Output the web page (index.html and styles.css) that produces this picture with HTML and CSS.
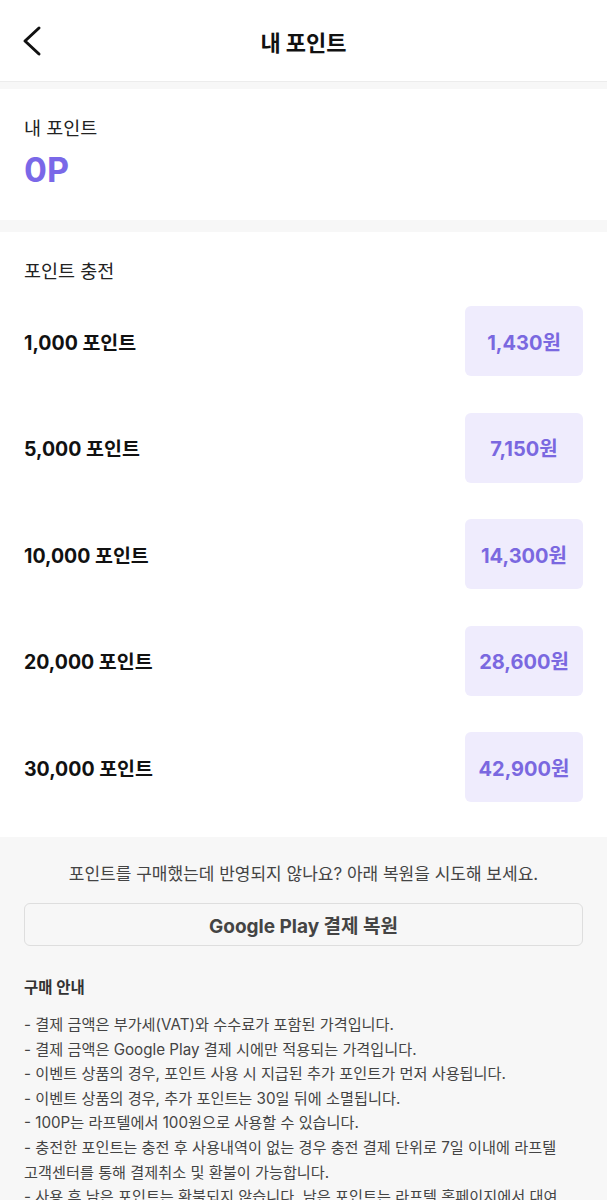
FILE: index.html
```html
<!DOCTYPE html>
<html lang="ko">

<head>
    <meta charset="UTF-8">
    <title>내 포인트</title>
    <link rel="stylesheet" href="styles.css">
</head>

<body>
    <div class="header">
        <span class="back">
            <svg width="20" height="32" viewBox="0 0 20 32">
                <path d="M17 3 L3 16 L17 29" fill="none" stroke="#111" stroke-width="3" stroke-linecap="round" stroke-linejoin="round" />
            </svg>
        </span>
        <h1 class="title">내 포인트</h1>
    </div>

    <div class="section my">
        <div class="label">내 포인트</div>
        <div class="point">0P</div>
    </div>

    <div class="section charge">
        <div class="label">포인트 충전</div>
        <ul class="list">
            <li><span class="amount">1,000 포인트</span><span class="price">1,430원</span></li>
            <li><span class="amount">5,000 포인트</span><span class="price">7,150원</span></li>
            <li><span class="amount">10,000 포인트</span><span class="price">14,300원</span></li>
            <li><span class="amount">20,000 포인트</span><span class="price">28,600원</span></li>
            <li><span class="amount">30,000 포인트</span><span class="price">42,900원</span></li>
        </ul>
    </div>

    <div class="info">
        <p class="restore-tip">포인트를 구매했는데 반영되지 않나요? 아래 복원을 시도해 보세요.</p>
        <button class="restore">Google Play 결제 복원</button>

        <h2 class="guide-title">구매 안내</h2>
        <ul class="guide">
            <li>- 결제 금액은 부가세(VAT)와 수수료가 포함된 가격입니다.</li>
            <li>- 결제 금액은 Google Play 결제 시에만 적용되는 가격입니다.</li>
            <li>- 이벤트 상품의 경우, 포인트 사용 시 지급된 추가 포인트가 먼저 사용됩니다.</li>
            <li>- 이벤트 상품의 경우, 추가 포인트는 30일 뒤에 소멸됩니다.</li>
            <li>- 100P는 라프텔에서 100원으로 사용할 수 있습니다.</li>
            <li>- 충전한 포인트는 충전 후 사용내역이 없는 경우 충전 결제 단위로 7일 이내에 라프텔<br>고객센터를 통해 결제취소 및 환불이 가능합니다.</li>
            <li>- 사용 후 남은 포인트는 환불되지 않습니다. 남은 포인트는 라프텔 홈페이지에서 대여<br>및 구매에 사용할 수 있습니다.</li>
        </ul>
    </div>
</body>

</html>
```

FILE: styles.css
```css
body,
h1,
h2,
p,
ul,
li {
    margin: 0;
    padding: 0;
    list-style: none;
}

body {
    background: #f7f7f7;
    font-family: "Inter", "Noto Sans CJK KR", sans-serif;
    color: #111;
}

.header {
    height: 81px;
    background: #fff;
    border-bottom: 1px solid #ececec;
    display: flex;
    align-items: center;
    justify-content: center;
    position: relative;
}

.back {
    position: absolute;
    left: 22px;
    top: 25px;
    width: 20px;
    height: 32px;
}

.title {
    font-size: 22px;
    font-weight: 700;
}

.section {
    background: #fff;
    padding: 0 24px;
}

.my {
    margin-top: 7px;
    padding-top: 27px;
    padding-bottom: 30px;
}

.label {
    font-size: 18.5px;
    line-height: 24px;
    color: #222;
}

.point {
    margin-top: 10px;
    font-size: 34px;
    line-height: 40px;
    font-weight: 700;
    color: #7a68e8;
}

.charge {
    margin-top: 12px;
    padding-top: 27px;
    padding-bottom: 35px;
}

.list {
    margin-top: 23px;
    display: flex;
    flex-direction: column;
    gap: 36.5px;
}

.list li {
    display: flex;
    align-items: center;
    justify-content: space-between;
}

.amount {
    font-size: 19.5px;
    font-weight: 700;
}

.price {
    width: 118px;
    height: 70px;
    border-radius: 6px;
    background: #efecfd;
    color: #7a68e0;
    font-size: 20px;
    font-weight: 700;
    display: flex;
    align-items: center;
    justify-content: center;
}

.info {
    padding: 25px 24px 40px;
    color: #444;
}

.restore-tip {
    text-align: center;
    font-size: 17px;
    line-height: 24px;
}

.restore {
    display: block;
    width: 100%;
    height: 43px;
    margin-top: 17px;
    border: 1px solid #dedede;
    border-radius: 6px;
    background: #f7f7f7;
    font-family: inherit;
    font-size: 19px;
    font-weight: 700;
    color: #444;
}

.guide-title {
    margin-top: 30px;
    font-size: 15.5px;
    line-height: 24px;
    font-weight: 700;
    color: #333;
}

.guide {
    margin-top: 13px;
    font-size: 15.2px;
    line-height: 24.6px;
    word-break: keep-all;
}
```
